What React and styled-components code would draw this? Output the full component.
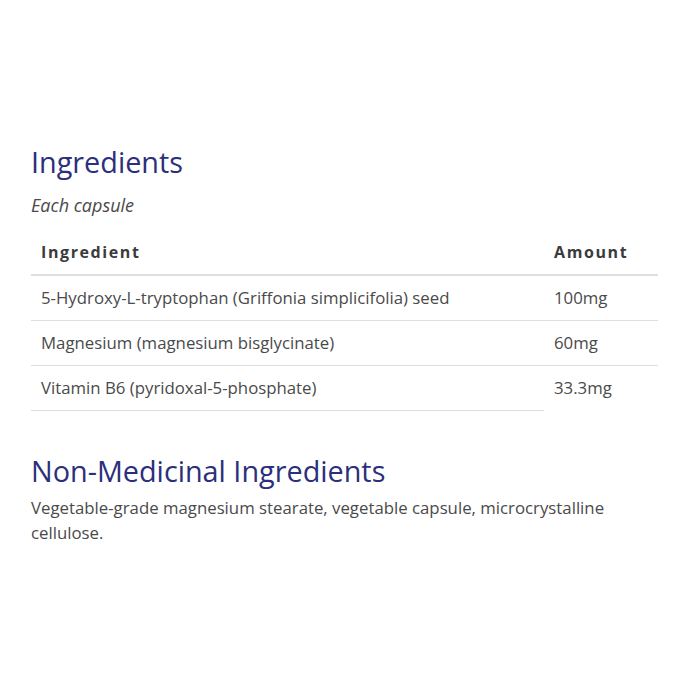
import React from "react";
import styled, { createGlobalStyle } from "styled-components";

const Global = createGlobalStyle`
  html, body { margin: 0; padding: 0; background: #fff; }
  body { font-family: "Open Sans", "Noto Sans", sans-serif; color: #4a4a4a; }
`;

const Page = styled.div`
  width: 627px;
  padding: 145px 0 0 31px;
`;

const Heading = styled.h2`
  margin: 0;
  font-size: 28.8px;
  line-height: 34px;
  font-weight: 400;
  color: #2b2f7c;
`;

const Sub = styled.p`
  margin: 14px 0 13px;
  font-size: 18px;
  line-height: 24px;
  font-style: italic;
  color: #4a4a4a;
`;

const Table = styled.table`
  width: 100%;
  border-collapse: collapse;
  font-size: 16.8px;
  line-height: 24px;
`;

const Th = styled.th`
  text-align: left;
  padding: 10px;
  font-size: 16px;
  font-weight: 700;
  letter-spacing: 1.6px;
  color: #3b3b3b;
  border-bottom: 2px solid #dedede;
  width: ${(p) => p.$w || "auto"};
`;

const Td = styled.td`
  padding: 10px;
  color: #4a4a4a;
  border-bottom: ${(p) => (p.$noBorder ? "none" : "1px solid #dedede")};
`;

const Section = styled.div`
  margin-top: 43px;
`;

const Para = styled.p`
  margin: 7px 0 0;
  font-size: 16.8px;
  line-height: 25px;
  color: #4a4a4a;
`;

const rows = [
  ["5-Hydroxy-L-tryptophan (Griffonia simplicifolia) seed", "100mg"],
  ["Magnesium (magnesium bisglycinate)", "60mg"],
  ["Vitamin B6 (pyridoxal-5-phosphate)", "33.3mg"],
];

export default function App() {
  return (
    <>
      <Global />
      <Page>
        <Heading>Ingredients</Heading>
        <Sub>Each capsule</Sub>
        <Table>
          <thead>
            <tr>
              <Th>Ingredient</Th>
              <Th $w="94px">Amount</Th>
            </tr>
          </thead>
          <tbody>
            {rows.map(([name, amt], i) => (
              <tr key={name}>
                <Td>{name}</Td>
                <Td $noBorder={i === rows.length - 1}>{amt}</Td>
              </tr>
            ))}
          </tbody>
        </Table>
        <Section>
          <Heading>Non-Medicinal Ingredients</Heading>
          <Para>
            Vegetable-grade magnesium stearate, vegetable capsule, microcrystalline cellulose.
          </Para>
        </Section>
      </Page>
    </>
  );
}
